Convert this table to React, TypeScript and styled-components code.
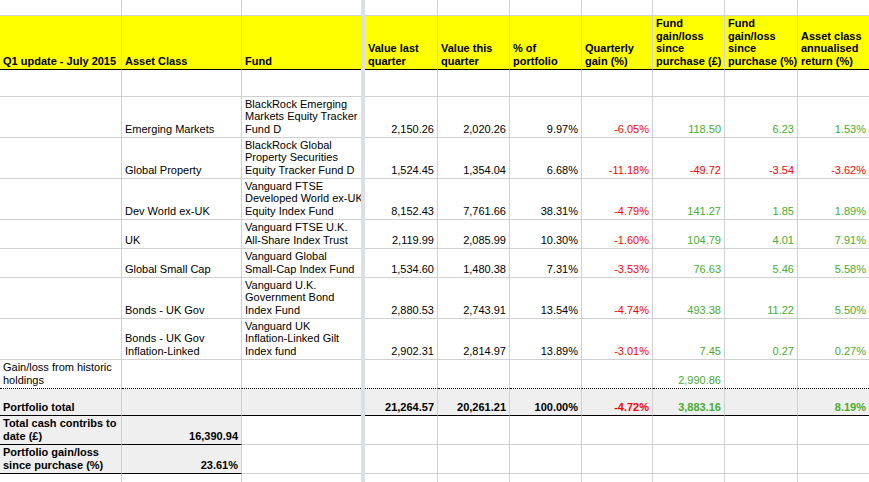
import React from "react";
import styled, { createGlobalStyle, css } from "styled-components";

const Global = createGlobalStyle`
  html, body { margin: 0; padding: 0; background: #ffffff; }
  body { font-family: "Liberation Sans", Arial, sans-serif; overflow: hidden; }
`;

const COLS = "122px 120px 119px 4px 73px 72px 72px 71px 72px 73px 1fr";

type Tone = "red" | "green";
type Edge = "grid" | "black" | "dotted";
type Fill = "none" | "yellow" | "gray";

interface CellSpec {
  text?: string | string[];
  right?: boolean;
  bold?: boolean;
  tone?: Tone;
  fill?: Fill;
  edge?: Edge;
}

interface RowSpec {
  h: number;
  edge?: Edge;
  fill?: Fill;
  bold?: boolean;
  cells: (CellSpec | string | null)[];
}

const Sheet = styled.div`
  width: 869px;
  height: 482px;
  overflow: hidden;
  font-family: "Liberation Sans", Arial, sans-serif;
  font-size: 11px;
  line-height: 12.4px;
  color: #000;
`;

const Row = styled.div<{ $h: number }>`
  display: grid;
  grid-template-columns: ${COLS};
  height: ${(p) => p.$h}px;
`;

const fills: Record<Fill, string> = {
  none: "#ffffff",
  yellow: "#ffff00",
  gray: "#efefef",
};

const edges: Record<Edge, string> = {
  grid: "1px solid #d0d0d0",
  black: "1px solid #000000",
  dotted: "1px dotted #000000",
};

const Cell = styled.div<{
  $right: boolean;
  $bold: boolean;
  $tone?: Tone;
  $fill: Fill;
  $edge: Edge;
  $last: boolean;
}>`
  box-sizing: border-box;
  min-width: 0;
  display: flex;
  flex-direction: column;
  justify-content: flex-end;
  align-items: ${(p) => (p.$right ? "flex-end" : "flex-start")};
  padding: 0 3px 2px 3px;
  background: ${(p) => fills[p.$fill]};
  border-bottom: ${(p) => edges[p.$edge]};
  border-right: ${(p) => (p.$last ? "none" : "1px solid #d0d0d0")};
  font-weight: ${(p) => (p.$bold ? 700 : 400)};
  color: ${(p) =>
    p.$tone === "red" ? "#ff0000" : p.$tone === "green" ? "#45ad30" : "#000000"};
  ${(p) =>
    p.$bold &&
    css`
      letter-spacing: 0;
    `}
`;

const Line = styled.span`
  display: block;
  white-space: nowrap;
`;

const Freeze = styled.div`
  background: #dcdfe6;
`;

const g = (text: string | string[]): CellSpec => ({ text, right: true, tone: "green" });
const r = (text: string | string[]): CellSpec => ({ text, right: true, tone: "red" });
const n = (text: string): CellSpec => ({ text, right: true });

const fundRow = (
  h: number,
  asset: string | string[],
  fund: string[],
  vals: [string, string, string],
  q: string,
  gain: CellSpec,
  pct: CellSpec,
  ann: CellSpec
): RowSpec => ({
  h,
  cells: [null, asset, fund, n(vals[0]), n(vals[1]), n(vals[2]), r(q), gain, pct, ann],
});

const rows: RowSpec[] = [
  { h: 2, cells: [] },
  { h: 14, cells: [] },
  {
    h: 54,
    edge: "black",
    fill: "yellow",
    bold: true,
    cells: [
      "Q1 update - July 2015",
      "Asset Class",
      "Fund",
      ["Value last", "quarter"],
      ["Value this", "quarter"],
      ["% of", "portfolio"],
      ["Quarterly", "gain (%)"],
      ["Fund", "gain/loss", "since", "purchase (£)"],
      ["Fund", "gain/loss", "since", "purchase (%)"],
      ["Asset class", "annualised", "return (%)"],
    ],
  },
  { h: 27, cells: [] },
  fundRow(
    41,
    "Emerging Markets",
    ["BlackRock Emerging", "Markets Equity Tracker", "Fund D"],
    ["2,150.26", "2,020.26", "9.97%"],
    "-6.05%",
    g("118.50"),
    g("6.23"),
    g("1.53%")
  ),
  fundRow(
    41,
    "Global Property",
    ["BlackRock Global", "Property Securities", "Equity Tracker Fund D"],
    ["1,524.45", "1,354.04", "6.68%"],
    "-11.18%",
    r("-49.72"),
    r("-3.54"),
    r("-3.62%")
  ),
  fundRow(
    41,
    "Dev World ex-UK",
    ["Vanguard FTSE", "Developed World ex-UK", "Equity Index Fund"],
    ["8,152.43", "7,761.66", "38.31%"],
    "-4.79%",
    g("141.27"),
    g("1.85"),
    g("1.89%")
  ),
  fundRow(
    29,
    "UK",
    ["Vanguard FTSE U.K.", "All-Share Index Trust"],
    ["2,119.99", "2,085.99", "10.30%"],
    "-1.60%",
    g("104.79"),
    g("4.01"),
    g("7.91%")
  ),
  fundRow(
    29,
    "Global Small Cap",
    ["Vanguard Global", "Small-Cap Index Fund"],
    ["1,534.60", "1,480.38", "7.31%"],
    "-3.53%",
    g("76.63"),
    g("5.46"),
    g("5.58%")
  ),
  fundRow(
    41,
    "Bonds - UK Gov",
    ["Vanguard U.K.", "Government Bond", "Index Fund"],
    ["2,880.53", "2,743.91", "13.54%"],
    "-4.74%",
    g("493.38"),
    g("11.22"),
    g("5.50%")
  ),
  fundRow(
    41,
    ["Bonds - UK Gov", "Inflation-Linked"],
    ["Vanguard UK", "Inflation-Linked Gilt", "Index fund"],
    ["2,902.31", "2,814.97", "13.89%"],
    "-3.01%",
    g("7.45"),
    g("0.27"),
    g("0.27%")
  ),
  {
    h: 29,
    edge: "dotted",
    cells: [["Gain/loss from historic", "holdings"], null, null, null, null, null, null, g("2,990.86")],
  },
  {
    h: 27,
    edge: "black",
    fill: "gray",
    bold: true,
    cells: [
      "Portfolio total",
      null,
      null,
      n("21,264.57"),
      n("20,261.21"),
      n("100.00%"),
      r("-4.72%"),
      g("3,883.16"),
      null,
      g("8.19%"),
    ],
  },
  {
    h: 29,
    cells: [
      { text: ["Total cash contribs to", "date (£)"], bold: true, fill: "gray", edge: "black" },
      { text: "16,390.94", right: true, bold: true, fill: "gray", edge: "black" },
    ],
  },
  {
    h: 29,
    cells: [
      { text: ["Portfolio gain/loss", "since purchase (%)"], bold: true, fill: "gray", edge: "black" },
      { text: "23.61%", right: true, bold: true, fill: "gray", edge: "black" },
    ],
  },
  { h: 29, cells: [] },
];

const renderText = (t?: string | string[]) => {
  if (t === undefined) return null;
  const lines = Array.isArray(t) ? t : [t];
  return lines.map((l, i) => <Line key={i}>{l}</Line>);
};

export default function App() {
  return (
    <>
      <Global />
      <Sheet>
        {rows.map((row, ri) => {
          const out: React.ReactNode[] = [];
          for (let ci = 0; ci < 10; ci++) {
            if (ci === 3) out.push(<Freeze key="freeze" />);
            const raw = row.cells[ci];
            const spec: CellSpec =
              raw == null ? {} : typeof raw === "string" || Array.isArray(raw) ? { text: raw } : raw;
            out.push(
              <Cell
                key={ci}
                $right={!!spec.right}
                $bold={spec.bold ?? !!row.bold}
                $tone={spec.tone}
                $fill={spec.fill ?? row.fill ?? "none"}
                $edge={spec.edge ?? row.edge ?? "grid"}
                $last={ci === 2 || ci === 9}
              >
                {renderText(spec.text)}
              </Cell>
            );
          }
          return (
            <Row key={ri} $h={row.h}>
              {out}
            </Row>
          );
        })}
      </Sheet>
    </>
  );
}
